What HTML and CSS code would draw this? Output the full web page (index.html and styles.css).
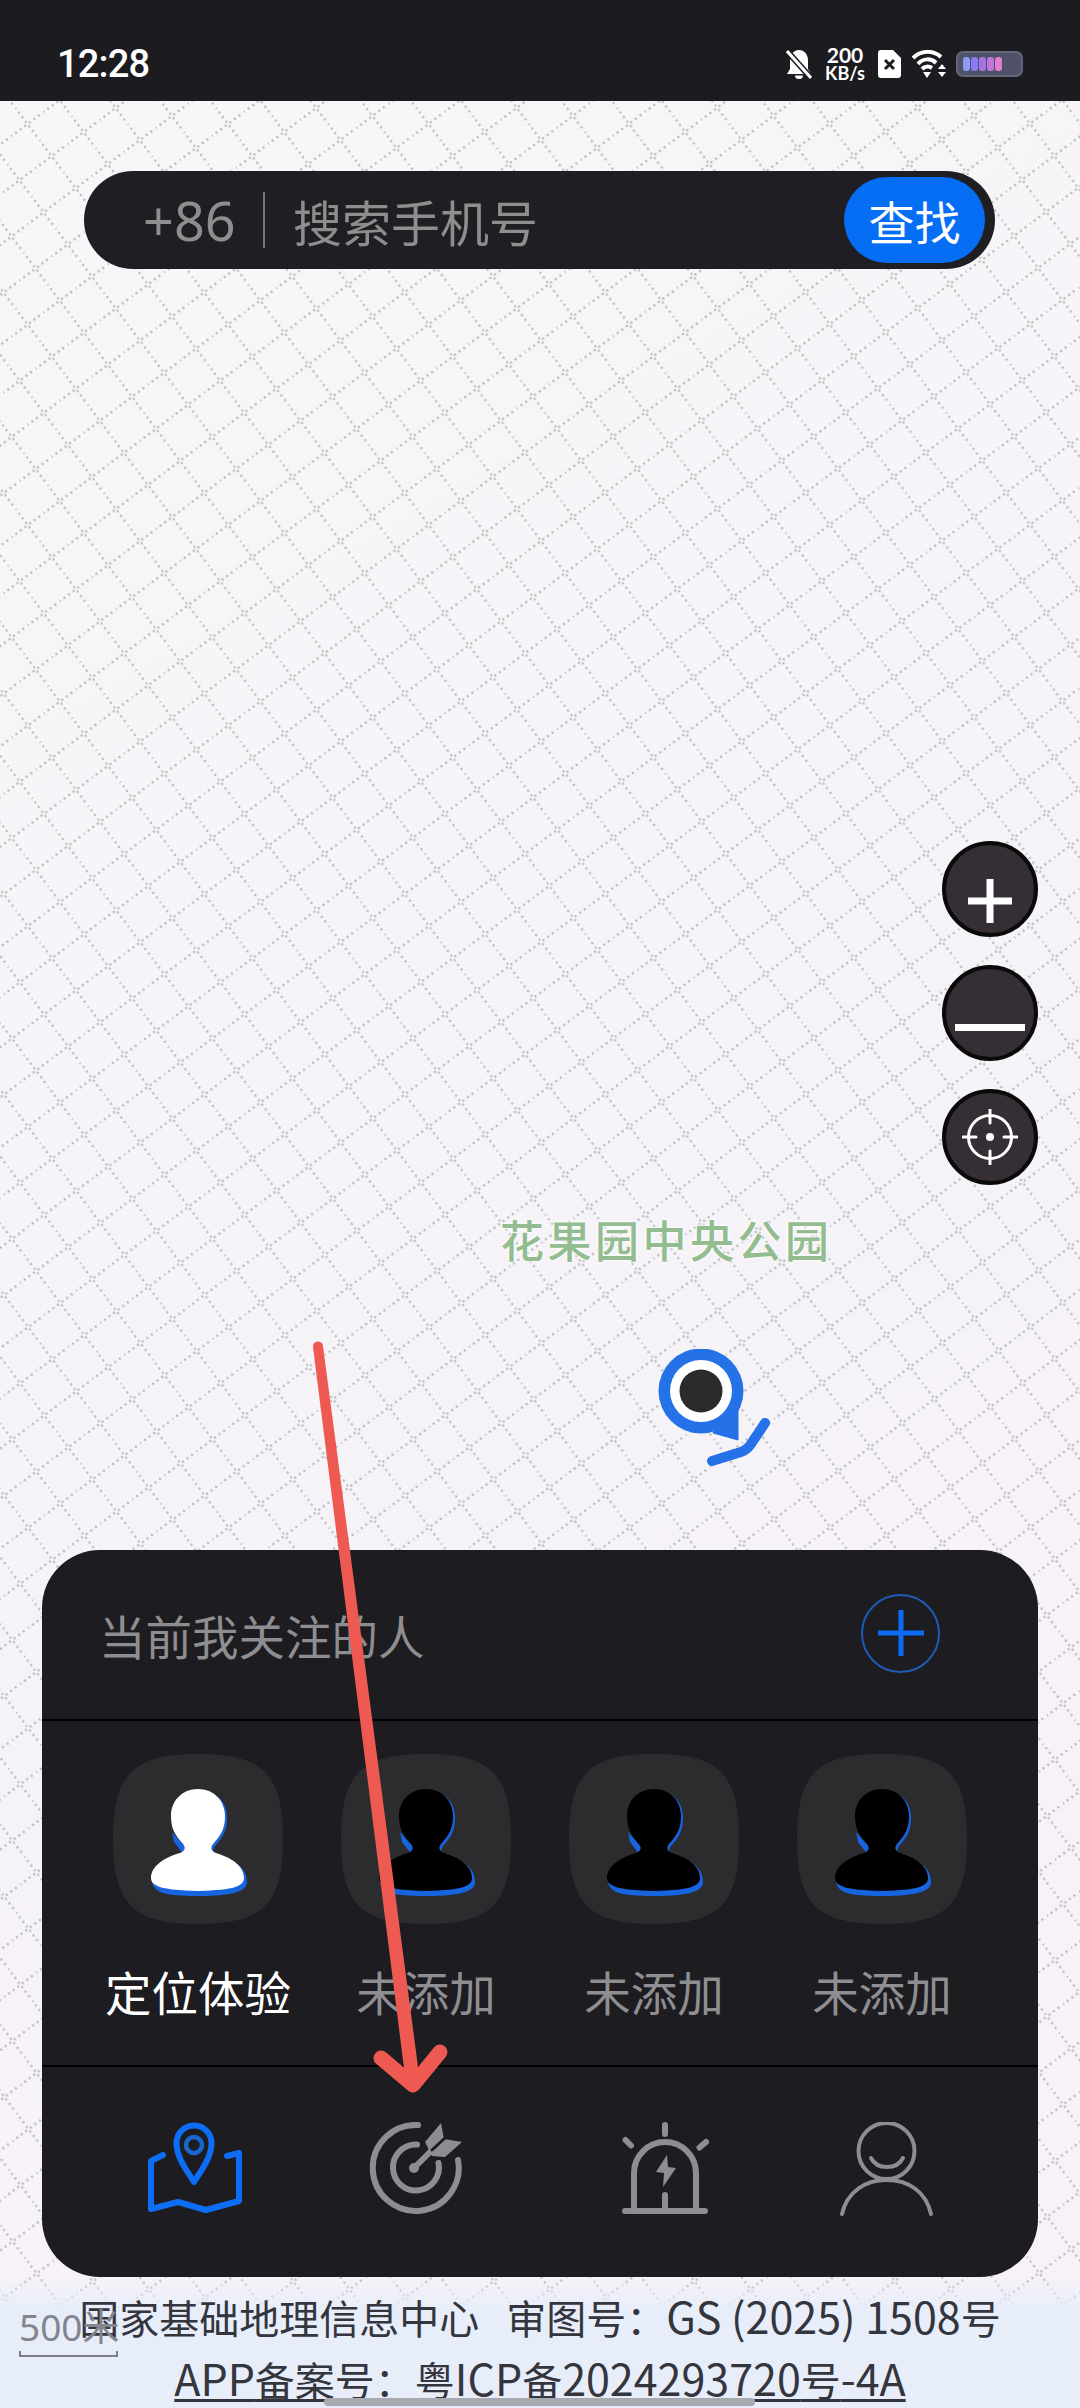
FILE: index.html
```html
<!DOCTYPE html>
<html lang="zh-CN">
<head>
    <meta charset="UTF-8">
    <meta name="viewport" content="width=device-width, initial-scale=1.0">
    <title>定位</title>
    <link rel="stylesheet" href="styles.css">
</head>
<body>
    <svg class="defs" width="0" height="0">
        <symbol id="person" viewBox="0 0 170 170">
            <path class="person-tile-bg" d="M85 0C150 0 170 20 170 85C170 150 150 170 85 170C20 170 0 150 0 85C0 20 20 0 85 0Z"/>
            <path class="person-shadow" d="M100 40C109 44 114 52 114 64C114 78 109 84 102 92C99 96 100 99 105 101C121 106 134 113 134 128C134 136 124 142 85 142C50 142 40 138 39 127L85 130L95 60Z"/>
            <path class="person-shadow" d="M59 78L73 94L71 101L61 88Z"/>
            <path d="M85 35C101 35 112 47 112 62C112 76 107 82 100 90C97 94 98 97 103 99C119 104 131 112 131 124C131 132 122 136 85 137C48 136 38 132 38 124C38 112 52 103 67 99C72 97 73 94 70 90C63 82 58 76 58 62C58 47 69 35 85 35Z"/>
        </symbol>
    </svg>

    <header class="status-bar">
        <span class="time">12:28</span>
        <div class="status-icons">
            <svg class="icon-bell" width="26" height="30" viewBox="0 0 26 30">
                <path d="M13 1C19 1 22 6 22 12V20L25 25H1L4 20V12C4 6 7 1 13 1Z" fill="#fff"/>
                <path d="M9 26.500A4 3.500 0 0 0 17 26.500Z" fill="#fff"/>
                <path d="M1 2L25 29" stroke="#1c1b1f" stroke-width="6"/>
                <path d="M1 2L25 29" stroke="#fff" stroke-width="3"/>
            </svg>
            <div class="net-speed">
                <span class="net-value">200</span>
                <span class="net-unit">KB/s</span>
            </div>
            <svg class="icon-sim" width="23" height="28" viewBox="0 0 23 28">
                <path d="M3 0H15L23 8V25A3 3 0 0 1 20 28H3A3 3 0 0 1 0 25V3A3 3 0 0 1 3 0Z" fill="#fff"/>
                <path d="M7 10L16 19M16 10L7 19" stroke="#1c1b1f" stroke-width="3"/>
            </svg>
            <svg class="icon-wifi" width="35" height="28" viewBox="0 0 35 28" fill="none" stroke="#fff" stroke-width="4">
                <path d="M1 8C9 0 21 0 29 7"/>
                <path d="M6 14C11 8 19 8 24 13"/>
                <path d="M10 19C13 16 17 16 20 18"/>
                <path d="M11 22H19L15 28Z" fill="#fff" stroke="none"/>
                <path d="M30 14L34 19H26ZM30 27L26 22H34Z" fill="#fff" stroke="none"/>
            </svg>
            <div class="battery">
                <span></span><span></span><span></span><span></span><span></span>
            </div>
        </div>
    </header>

    <main class="map">
        <svg class="map-grid" width="1080" height="2307">
            <defs>
                <pattern id="grid" width="40.100" height="40.100" patternUnits="userSpaceOnUse" patternTransform="translate(51.700 255.700) rotate(-36.900) translate(-20.050 -20.050)">
                    <path d="M0 20.050H40.100M20.050 0V40.100" stroke="#b2b2b2" stroke-width="2.300" stroke-linecap="round" stroke-dasharray="0 5.730" fill="none"/>
                </pattern>
            </defs>
            <rect width="1080" height="2307" fill="url(#grid)"/>
        </svg>

        <span class="place-label">花果园中央公园</span>
        <svg class="place-pin" width="120" height="125" viewBox="0 0 120 125">
            <circle cx="44" cy="42" r="42.500" fill="#2471e8"/>
            <path d="M81 60V91L56 84L60 70Z" fill="#2471e8" stroke="#2471e8" stroke-linejoin="round"/>
            <circle cx="44" cy="42" r="31" fill="#fff"/>
            <circle cx="44" cy="42" r="21.500" fill="#2b2b2b"/>
            <path d="M108 74L94 95Q90 101 84 103L55 112" fill="none" stroke="#2471e8" stroke-width="10" stroke-linecap="round" stroke-linejoin="round"/>
        </svg>

        <form class="search-bar">
            <span class="search-code">+86</span>
            <span class="search-divider"></span>
            <span class="search-hint">搜索手机号</span>
            <button class="search-btn" type="button">查找</button>
        </form>

        <div class="zoom-controls">
            <button class="map-btn" type="button">
                <svg width="44" height="44" viewBox="0 0 44 44" class="icon-plus"><path d="M22 0V44M0 22H44" stroke="#fff" stroke-width="7"/></svg>
            </button>
            <button class="map-btn" type="button">
                <svg width="70" height="7" viewBox="0 0 70 7" class="icon-minus"><path d="M0 3.500H70" stroke="#fff" stroke-width="7"/></svg>
            </button>
            <button class="map-btn" type="button">
                <svg width="56" height="56" viewBox="0 0 56 56" fill="none" stroke="#fff" stroke-width="3">
                    <circle cx="28" cy="28" r="21.500"/>
                    <path d="M28 1V14M28 42V55M1 28H14M42 28H55" stroke-linecap="round"/>
                    <circle cx="28" cy="28" r="4" fill="#fff" stroke="none"/>
                </svg>
            </button>
        </div>

        <section class="sheet">
            <div class="sheet-head">
                <span class="sheet-title">当前我关注的人</span>
                <button class="add-btn" type="button">
                    <svg width="46" height="46" viewBox="0 0 46 46"><path d="M23 0V46M0 23H46" stroke="#0d6cf4" stroke-width="5"/></svg>
                </button>
            </div>

            <div class="people">
                <div class="person person-active">
                    <svg class="person-icon"><use href="#person"/></svg>
                    <span class="person-name">定位体验</span>
                </div>
                <div class="person">
                    <svg class="person-icon"><use href="#person"/></svg>
                    <span class="person-name">未添加</span>
                </div>
                <div class="person">
                    <svg class="person-icon"><use href="#person"/></svg>
                    <span class="person-name">未添加</span>
                </div>
                <div class="person">
                    <svg class="person-icon"><use href="#person"/></svg>
                    <span class="person-name">未添加</span>
                </div>
            </div>

            <nav class="tabs">
                <svg class="tab tab-active" viewBox="0 0 94 94" fill="none" stroke="currentColor" stroke-width="6" stroke-linecap="round" stroke-linejoin="round">
                    <path d="M15 33L3 39V87L30 80L58 88L91 79V31L79 34"/>
                    <path d="M46 60C40 50 28.500 36 28.500 21A17.500 17.500 0 0 1 63.500 21C63.500 36 52 50 46 60Z"/>
                    <circle cx="46" cy="23" r="8" stroke="#1a66d0" stroke-width="4.500"/>
                </svg>
                <svg class="tab" viewBox="0 0 94 94" fill="none" stroke="currentColor" stroke-width="6" stroke-linecap="round">
                    <path d="M49 3A43 43 0 1 0 89 38"/>
                    <path d="M48 22.500A23 23 0 1 0 69.500 41"/>
                    <path d="M45 46L64 27"/>
                    <circle cx="45" cy="46" r="5" fill="currentColor" stroke="none"/>
                    <path d="M72 1L75 17L93 20L76 35L63 34L56 20Z" fill="currentColor" stroke="none"/>
                    <path d="M63 28L76 16" stroke="#1c1b1f" stroke-width="3"/>
                </svg>
                <svg class="tab tab-siren" viewBox="0 0 94 94" fill="none" stroke="currentColor" stroke-width="6" stroke-linecap="round">
                    <path d="M7 89H87"/>
                    <path d="M16 88V51A31 31 0 0 1 78 51V88"/>
                    <path d="M47 73V88M47 3V12M7.500 18L13 23.500M88 20L81.500 25.500"/>
                    <path d="M49 33L38 50L46 51L45 65L58 46L50 45Z" fill="currentColor" stroke="none"/>
                </svg>
                <svg class="tab" viewBox="0 0 94 94" fill="none" stroke="currentColor" stroke-width="4" stroke-linecap="round">
                    <circle cx="47.500" cy="29" r="28"/>
                    <path d="M32 36C38 48 58 48 64 36"/>
                    <path d="M3 92C8 70 26 58 47.500 58C70 58 87 70 92 92"/>
                </svg>
            </nav>
        </section>

        <footer class="map-footer">
            <div class="scale">
                <span class="scale-text">500米</span>
                <span class="scale-bar"></span>
            </div>
            <p class="footer-line">国家基础地理信息中心&nbsp;&nbsp;&nbsp;审图号：<span class="latin">GS (2025) 1508</span>号</p>
            <p class="footer-line footer-link"><span class="latin">APP</span>备案号：粤<span class="latin">ICP</span>备<span class="latin">2024293720</span>号<span class="latin">-4A</span></p>
            <span class="home-indicator"></span>
        </footer>
    </main>

    <!-- red annotation drawn over the screenshot -->
    <svg class="annotation" width="1080" height="2408">
        <path d="M313 1347A5 5 0 0 1 323 1346L420 2082L406 2084Z" fill="#ee5a52"/>
        <path d="M381 2058L413 2085L440 2052" fill="none" stroke="#ee5a52" stroke-width="15" stroke-linecap="round" stroke-linejoin="round"/>
    </svg>
</body>
</html>
```

FILE: styles.css
```css
* {
    margin: 0;
    padding: 0;
    box-sizing: border-box;
}

body {
    position: relative;
    width: 1080px;
    height: 2408px;
    overflow: hidden;
    display: flex;
    flex-direction: column;
    font-family: "Noto Sans CJK SC", "Noto Sans", sans-serif;
    background: #1c1b1f;
}

button {
    border: none;
    font-family: inherit;
}

.defs {
    position: absolute;
}

/* Status bar */
.status-bar {
    flex: none;
    height: 101px;
    padding: 0 57px;
    display: flex;
    align-items: center;
    justify-content: space-between;
    background: #1c1b1f;
    color: #fff;
}

.time {
    font-family: Roboto, sans-serif;
    font-size: 38px;
    font-weight: 500;
    letter-spacing: -0.8px;
    margin-top: 27px;
}

.status-icons {
    display: flex;
    align-items: center;
    margin-top: 27px;
}

.icon-bell {
    margin-right: 14px;
}

.net-speed {
    display: flex;
    flex-direction: column;
    align-items: center;
    width: 38px;
    margin-right: 14px;
    font-family: Lato, sans-serif;
    font-weight: 700;
    line-height: 18px;
}

.net-value {
    font-size: 21px;
}

.net-unit {
    font-size: 18px;
    white-space: nowrap;
}

.icon-sim {
    margin-right: 11px;
}

.icon-wifi {
    margin-right: 9px;
}

.battery {
    width: 67px;
    height: 26px;
    padding: 4px 5px;
    display: flex;
    gap: 1px;
    background: #4f5269;
    border: 2px solid #62657c;
    border-radius: 7px;
}

.battery span {
    width: 7px;
    border-radius: 3px;
}

.battery span:nth-child(1) { background: #8f9cf0; }
.battery span:nth-child(2) { background: #8a7df0; }
.battery span:nth-child(3) { background: #a574e6; }
.battery span:nth-child(4) { background: #c674d8; }
.battery span:nth-child(5) { background: #e07fcb; }

/* Map */
.map {
    position: relative;
    flex: 1;
    display: flex;
    flex-direction: column;
    background: linear-gradient(150deg, #f7f6f8 0%, #f6f3f8 60%, #f8f1f8 100%);
}

.map-grid {
    position: absolute;
    top: 0;
    left: 0;
}

.place-label {
    position: absolute;
    left: 500px;
    top: 1108px;
    font-size: 44px;
    font-weight: 500;
    line-height: 60px;
    letter-spacing: 3.500px;
    color: #93bd90;
    white-space: nowrap;
    text-shadow: 0 0 3px #fff, 0 0 3px #fff;
}

.place-pin {
    position: absolute;
    left: 657px;
    top: 1248px;
}

.search-bar {
    position: relative;
    height: 98px;
    margin: 70px 85px 0 84px;
    padding: 0 10px 0 59px;
    display: flex;
    align-items: center;
    background: #1f1e22;
    border-radius: 49px;
}

.search-code {
    width: 90px;
    font-family: "Noto Sans", sans-serif;
    font-size: 54px;
    color: #8e8e8e;
    white-space: nowrap;
}

.search-divider {
    width: 2px;
    height: 56px;
    margin: 0 28px 0 30px;
    background: #77767a;
}

.search-hint {
    flex: 1;
    font-size: 49px;
    color: #8e8e8e;
}

.search-btn {
    width: 141px;
    height: 86px;
    border-radius: 43px;
    background: #056ef5;
    color: #fff;
    font-size: 46px;
}

.zoom-controls {
    position: relative;
    align-self: flex-end;
    margin: 572px 42px 0 0;
    display: flex;
    flex-direction: column;
    gap: 28px;
}

.map-btn {
    width: 96px;
    height: 96px;
    display: flex;
    align-items: center;
    justify-content: center;
    background: #352f35;
    border: 4px solid #0a0a0a;
    border-radius: 50%;
}

.icon-plus {
    margin-top: 24px;
}

.icon-minus {
    margin-top: 28px;
}

/* Bottom sheet */
.sheet {
    position: relative;
    margin: 365px 42px 0;
    height: 727px;
    display: flex;
    flex-direction: column;
    background: #1d1c20;
    border-radius: 58px;
}

.sheet-head {
    flex: none;
    height: 171px;
    padding: 0 98px 0 57px;
    display: flex;
    align-items: center;
    justify-content: space-between;
    border-bottom: 2px solid #000;
}

.sheet-title {
    font-size: 46.500px;
    color: #8e8e91;
}

.add-btn {
    width: 79px;
    height: 79px;
    margin-top: -3px;
    display: flex;
    align-items: center;
    justify-content: center;
    background: none;
    border: 2px solid #1e5bb5;
    border-radius: 50%;
}

.people {
    flex: none;
    height: 346px;
    padding: 33px 42px 0;
    display: grid;
    grid-template-columns: repeat(4, 228px);
    border-bottom: 2px solid #000;
}

.person {
    display: flex;
    flex-direction: column;
    align-items: center;
    color: #000;
}

.person-active {
    color: #fff;
}

.person-icon {
    display: block;
    width: 170px;
    height: 170px;
    fill: currentColor;
}

.person-tile-bg {
    fill: #2c2c2e;
}

.person-shadow {
    fill: #1664e0;
}

.person-name {
    margin-top: 33px;
    font-size: 46.500px;
    line-height: 68px;
    color: #8e8e93;
}

.person-active .person-name {
    color: #fff;
}

.tabs {
    flex: 1;
    padding: 55px 0 0 106px;
    display: flex;
    align-items: flex-start;
    gap: 127px;
    color: #8e8d91;
}

.tab {
    flex: none;
    width: 94px;
    height: 94px;
}

.tab-active {
    color: #0e6df5;
}

.tab-siren {
    margin-left: 28px;
}

/* Footer notes over the map */
.map-footer {
    position: relative;
    flex: 1;
    padding-top: 8px;
    text-align: center;
    background: linear-gradient(180deg, rgba(232, 239, 250, 0) 0%, #e7eefa 25%, #e7eefa 100%);
}

.footer-line {
    font-size: 40px;
    line-height: 60px;
    color: #35353d;
    white-space: nowrap;
}

.latin {
    font-size: 43px;
}

.footer-link {
    text-decoration: underline;
    text-decoration-thickness: 3px;
    text-underline-offset: 3px;
}

.scale {
    position: absolute;
    left: 19px;
    top: 28px;
    width: 99px;
}

.scale-text {
    display: block;
    font-family: "Noto Sans", "Noto Sans CJK SC", sans-serif;
    font-size: 37px;
    line-height: 44px;
    color: #85858d;
    white-space: nowrap;
}

.scale-bar {
    display: block;
    height: 6px;
    margin-top: 2px;
    border: 2px solid #7e7e88;
    border-top: none;
}

.home-indicator {
    position: absolute;
    left: 324px;
    bottom: 3px;
    width: 431px;
    height: 8px;
    background: #a9a9b0;
    border-radius: 4px;
}

.annotation {
    position: absolute;
    top: 0;
    left: 0;
    pointer-events: none;
}
```
